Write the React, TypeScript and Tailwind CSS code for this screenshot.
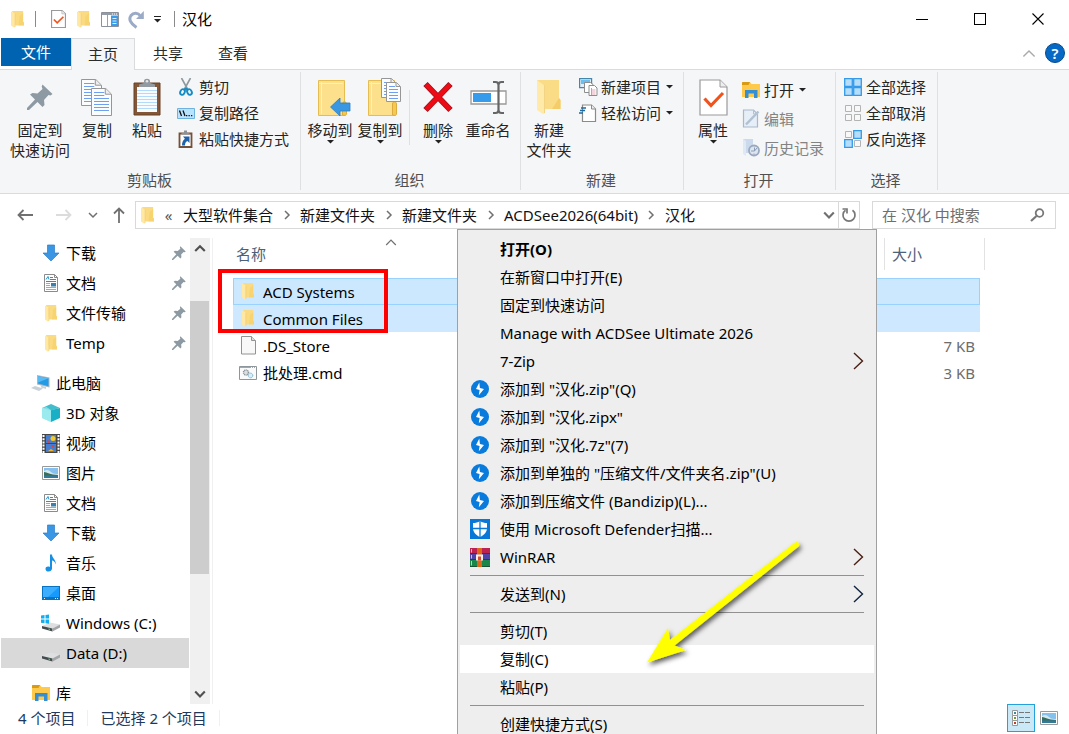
import type { ReactNode } from "react";

const svg = "block shrink-0";

function Folder({ w = 12, h = 17 }: { w?: number; h?: number }) {
  return (
    <svg className={svg} width={w} height={h} viewBox="0 0 12 17" preserveAspectRatio="none">
      <path d="M1 0h10.2v10.6l.8.8v3H4z" fill="#fbdb81" />
      <path d="M8 5l3.200-3v9l.8.4v3H7z" fill="#f5ce66" opacity=".6" />
      <path d="M0 .4L3.800 2.600V16l-.8.8L0 14.400z" fill="#ffe8a3" />
      <path d="M3.800 2.600V16" stroke="#eec667" strokeWidth=".5" />
    </svg>
  );
}

function LargeFolder() {
  return (
    <svg className={svg} width="26" height="36" viewBox="0 0 26 36">
      <path d="M1 1h22v18l1.500 2V30H5z" fill="#fbdc86" />
      <path d="M23 19l1.500 2V30H16z" fill="#f4cd68" />
      <path d="M1 1l8 6v27l-2 1-6-4z" fill="#ffeaa9" />
      <path d="M8.500 6.500V34" stroke="#e9c56b" strokeWidth=".6" />
    </svg>
  );
}

function Checked({ big = false }: { big?: boolean }) {
  return (
    <svg className={svg} width={big ? 29 : 15} height={big ? 37 : 18} viewBox="0 0 29 37" preserveAspectRatio="none">
      <path d="M1 1h20l7 7v28H1z" fill="#fff" stroke="#9a9a9a" strokeWidth={big ? 1.2 : 2.400} />
      <path d="M21 1v7h7" fill="#eee" stroke="#9a9a9a" />
      <path d="M5.500 19.500l6.500 7L24 14" fill="none" stroke="#f0541e" strokeWidth="3.200" />
    </svg>
  );
}

function Pane() {
  return (
    <svg className={svg} width="18" height="15" viewBox="0 0 18 15">
      <path d="M.5.5h17v14H.5z" fill="#fff" stroke="#8a919b" />
      <path d="M1 1h16v2H1z" fill="#939ba7" />
      <path d="M11 1.500h1v1h-1zM13 1.500h1v1h-1zM15 1.500h1v1h-1z" fill="#fff" />
      <path d="M6.500 3v11" stroke="#9ba1aa" />
      <path d="M10 3.500h7V14h-7z" fill="#3a9be8" />
      <path d="M11.500 6.500h4M11.500 9h4M11.500 11.500h4" stroke="#d6ecff" />
    </svg>
  );
}

function Redo() {
  return (
    <svg className={svg} width="17" height="19" viewBox="0 0 17 19">
      <path d="M8.500 17.500C2 13 .5 9 3 5.500c2.500-3.300 7-3 9.500.5" fill="none" stroke="#9baac6" strokeWidth="3" />
      <path d="M15.800 1v8H8z" fill="#9baac6" />
    </svg>
  );
}

function Caret() {
  return (
    <svg className={svg} width="7" height="4" viewBox="0 0 7 4">
      <path d="M0 0h7L3.500 3.500z" fill="#222" />
    </svg>
  );
}

function Pin({ size = 14 }: { size?: number }) {
  return (
    <svg className={svg} width={size} height={size} viewBox="0 0 26 26">
      <path d="M15.500.5l10 9.500-2 1.500-2-.5-4.500 5 .5 5-2 2-5-5L2 26H0v-2l8-8.500-5-5 2.500-1.500 5 .5 5-4.500-.8-2.500z" fill="#8d9aa3" />
    </svg>
  );
}

function Paper({ x, y, w, h, lines }: { x: number; y: number; w: number; h: number; lines: number }) {
  const f = w / 3.500;
  return (
    <g transform={`translate(${x} ${y})`}>
      <path d={`M.5.5h${w - f}l${f} ${f}v${h - f}H.5z`} fill="#fbfcfe" stroke="#969696" />
      <path d={`M${w - f} .5v${f}h${f}`} fill="#eee" stroke="#969696" />
      {Array.from({ length: lines }, (_, i) => (
        <path key={i} d={`M3 ${4.500 + i * 3}h${i * 3 < f - 1 ? w - f - 4 : w - 5}`} stroke="#6f9ff0" />
      ))}
    </g>
  );
}

function CopyIcon() {
  return (
    <svg className={svg} width="32" height="37" viewBox="0 0 32 37">
      <Paper x={0} y={0} w={20} h={26} lines={7} />
      <Paper x={10} y={9} w={20} h={27} lines={7} />
    </svg>
  );
}

function Clipboard() {
  return (
    <svg className={svg} width="28" height="38" viewBox="0 0 28 38">
      <path d="M1 5h26v32H1z" fill="#825637" stroke="#684127" />
      <path d="M4 9h20v25H4z" fill="#f8fbff" />
      {[12, 15, 18, 21, 24, 27, 30].map((y) => (
        <path key={y} d={`M4 ${y + 0.500}h20`} stroke="#b4dafa" />
      ))}
      <path d="M6 9V6.500l5-1.500V3c0-3 6-3 6 0v2l5 1.500V9z" fill="#929ba1" />
      <circle cx="14" cy="3.200" r="1.300" fill="#e8e8e8" />
    </svg>
  );
}

function Scissors() {
  return (
    <svg className={svg} width="18" height="18" viewBox="0 0 18 18">
      <path d="M4.500 0l6 11M13.500 0l-6 11" stroke="#8e989e" strokeWidth="1.600" />
      <path d="M9 9.500l2.500 1.500-1 3L9 11.500 7.500 14l-1-3z" fill="#168bc4" />
      <ellipse cx="5.500" cy="14" rx="2.200" ry="2.900" transform="rotate(25 5.500 14)" fill="none" stroke="#168bc4" strokeWidth="1.900" />
      <ellipse cx="12.500" cy="14" rx="2.200" ry="2.900" transform="rotate(-25 12.500 14)" fill="none" stroke="#168bc4" strokeWidth="1.900" />
    </svg>
  );
}

function PathIcon() {
  return (
    <svg className={svg} width="18" height="11" viewBox="0 0 18 11">
      <path d="M.5.5h17v10H.5z" fill="#b9e2fd" stroke="#6eb3df" />
      <path d="M2.500 2.500l2 5.500M6 2.500L8 8" stroke="#111" strokeWidth="1.300" />
      <path d="M9 7h1.300v1.300H9zM11.500 7h1.300v1.300h-1.300zM14 7h1.300v1.300H14z" fill="#111" />
    </svg>
  );
}

function PasteLink() {
  return (
    <svg className={svg} width="18" height="18" viewBox="0 0 18 18">
      <path d="M2.500 3.500h12v13.500h-12z" fill="#fff" stroke="#765139" strokeWidth="1.800" />
      <path d="M4.500 4.500V3H7V.5h3V3h2.500v1.500z" fill="#899299" />
      <path d="M6 6.500h6.500V13l-2-2c-2 1.200-2.500 2-2.500 4.500H5c0-3.200 1-5 2.900-6.700z" fill="#1d62aa" />
    </svg>
  );
}

function TransferFolder({ copy = false }: { copy?: boolean }) {
  return (
    <svg className={svg} width="34" height="39" viewBox="0 0 34 39">
      <path d="M1.500 2.500h26v35h-26z" fill="#fde08c" stroke="#e5bd51" />
      <path d="M4.500 4v32M2 5.500h24" stroke="#fff0b9" />
      <path d="M25.500 37V26c0-3 4-3 4 0v10l-1 1.500z" fill="#f6ca50" stroke="#dcad3e" />
      {copy ? (
        <>
          <Paper x={14} y={0} w={14} h={19} lines={5} />
          <Paper x={19} y={4} w={14} h={19} lines={5} />
        </>
      ) : (
        <path d="M13.500 29l9.500-9V25h10v8H23v5z" fill="#3a98e2" stroke="#2b7fc5" strokeWidth=".8" />
      )}
    </svg>
  );
}

function DeleteIcon() {
  return (
    <svg className={svg} width="32" height="32" viewBox="0 0 32 32">
      <path d="M3.500 3l25 26M28.500 3l-25 26" stroke="#a1121a" strokeWidth="6" />
      <path d="M4 3.500l24 25M28 3.500l-24 25" stroke="#ed0b16" strokeWidth="4.500" />
    </svg>
  );
}

function RenameIcon() {
  return (
    <svg className={svg} width="37" height="35" viewBox="0 0 37 35">
      <path d="M1 11h35v13H1z" fill="#fff" stroke="#999" strokeWidth="1.300" />
      <path d="M3 13h18v9H3z" fill="#369bea" />
      <path d="M23 2h2.500c2.500 0 3 1 3 3v25c0 2 1 3 3 3H34M34 2h-2.500c-2 0-3 1-3 3v25c0 2-.5 3-3 3H23" fill="none" stroke="#666" strokeWidth="2.200" />
    </svg>
  );
}

function NewItem() {
  return (
    <svg className={svg} width="19" height="18" viewBox="0 0 19 18">
      <path d="M.6.6h12v9H.6z" fill="#dff0fc" stroke="#4487ab" strokeWidth="1.200" />
      <path d="M2 2h9v4H2z" fill="#6cbef0" />
      <path d="M5.500 4.500h6l2.500 2v8H5.500z" fill="#fff" stroke="#8d8d8d" />
      <path d="M10 7.500h5.500l2.500 2.500v7.500h-8z" fill="#fff" stroke="#8d8d8d" />
      <path d="M12 12h4.500M12 14h4.500M12 16h4.500" stroke="#e7a9b9" />
      <path d="M12.500 10v7" stroke="#82b7df" />
    </svg>
  );
}

function EasyAccess() {
  return (
    <svg className={svg} width="19" height="19" viewBox="0 0 19 19">
      <path d="M3.500 1h9l4 4v12.500h-13z" fill="#fff" stroke="#8b8b8b" strokeWidth="1.200" />
      <path d="M12.500 1v4h4" fill="#eee" stroke="#8b8b8b" />
      <path d="M2 4h5M1 6.500h5M0 9h4" stroke="#206b9f" strokeWidth="1.300" />
    </svg>
  );
}

function OpenFolder() {
  return (
    <svg className={svg} width="18" height="16" viewBox="0 0 18 16">
      <path d="M0 1c0-1 .6-1 1-1h7l1.500 2H18v13H0z" fill="#ffca4b" />
      <path d="M0 1c0-1 .6-1 1-1h7l-1.500 3H0z" fill="#d99b14" />
      <path d="M3 8h12.500v8H12v-4.500H6.500V16H3z" fill="#378fd3" />
    </svg>
  );
}

function EditIcon() {
  return (
    <svg className={svg} width="18" height="19" viewBox="0 0 18 19">
      <path d="M1.500 1h10l4 4v13h-14z" fill="#e6eef7" stroke="#a9b8cb" strokeWidth="1.200" />
      <path d="M4 15.500L16.500 2.500" stroke="#b1c0d2" strokeWidth="2.500" />
      <path d="M11.500 1v4h4" fill="none" stroke="#b6c1cf" />
    </svg>
  );
}

function HistoryIcon() {
  return (
    <svg className={svg} width="18" height="19" viewBox="0 0 18 19">
      <path d="M1 1h10v14H1z" fill="#cbd9ec" />
      <path d="M1 1l3 2v15l-3-2z" fill="#dfe9f6" />
      <circle cx="12" cy="12.500" r="5" fill="#dde5f0" stroke="#9aa9bf" strokeWidth="1.800" />
      <path d="M12.500 9.500v3.500l2.500-3M9 13h3.500M12 15.500v1" fill="none" stroke="#8d9db5" />
    </svg>
  );
}

function Grid({ on }: { on: number[] }) {
  const xy = [[1, 1], [10, 1], [1, 10], [10, 10]];
  return (
    <svg className={svg} width="18" height="18" viewBox="0 0 18 18">
      {xy.map(([x, y], i) =>
        on.includes(i) ? (
          <path key={i} d={`M${x - 0.300} ${y - 0.300}h7.600v7.600h-7.600z`} fill="#b6defb" stroke="#339aea" strokeWidth="1.300" />
        ) : (
          <path key={i} d={`M${x + 0.500} ${y + 0.500}h6v6h-6z`} fill="#f8f8f8" stroke="#b3b3b3" />
        )
      )}
    </svg>
  );
}

function Down() {
  return (
    <svg className={svg} width="18" height="18" viewBox="0 0 18 18">
      <path d="M5.500 1h7v8H17l-8 8-8-8h4.500z" fill="#3b96e3" stroke="#2a7dcc" strokeWidth=".7" />
    </svg>
  );
}

function DocIcon() {
  return (
    <svg className={svg} width="18" height="18" viewBox="0 0 18 18">
      <path d="M2.500.5h10l3 3v14h-13z" fill="#fff" stroke="#8b8b8b" />
      <path d="M12.500.5v3h3" fill="none" stroke="#8b8b8b" />
      <path d="M4 5.500l2-3 1 3M8 3.500h3M8 5.500h6M4 7.500h10" stroke="#2492d1" fill="none" />
      <path d="M4 9.500h4M4 11.500h4M4 13.500h10M4 15.500h10" stroke="#a8a8a8" />
      <path d="M9 9h5v3.500H9z" fill="#3e7fab" />
    </svg>
  );
}

function Computer() {
  return (
    <svg className={svg} width="20" height="18" viewBox="0 0 20 18">
      <path d="M6 1l12.500 2.500v10L6 10.500z" fill="#a8b7c3" />
      <path d="M7 2.300l10.500 2v8L7 9.500z" fill="#249be5" />
      <path d="M7 2.300l10.500 2L7 8.500z" fill="#58baf3" />
      <path d="M10 11.500v2l5 1.500v-2M4 12l8 2.500-4 2.500-8-3z" fill="#c8d1d8" />
    </svg>
  );
}

function Cube() {
  return (
    <svg className={svg} width="18" height="18" viewBox="0 0 18 18">
      <path d="M0 4l9 2v12l-9-4z" fill="#76e0ea" />
      <path d="M18 4L9 6v12l9-4z" fill="#19afc4" />
      <path d="M0 4l9-4 9 4-9 2.500z" fill="#43bccb" />
      <path d="M0 4l4.500-1L9 6v12l-9-4z" fill="#b2f1f4" opacity=".6" />
    </svg>
  );
}

function Film() {
  return (
    <svg className={svg} width="18" height="19" viewBox="0 0 18 19">
      <path d="M0 0h18v19H0z" fill="#464646" />
      <path d="M4 1h10v8H4zM4 10h10v8H4z" fill="#477ed0" />
      <circle cx="11" cy="4.500" r="2.500" fill="#f4c923" />
      <path d="M9 11h4l-2 3zM5 6l3 1-1 2-2-1z" fill="#e53d37" />
      <path d="M6 17l3-2 3 2z" fill="#f4b424" />
      <path d="M1.500 1v18M16.500 1v18" stroke="#fff" strokeWidth="2" strokeDasharray="2 1.200" />
    </svg>
  );
}

function Picture() {
  return (
    <svg className={svg} width="18" height="14" viewBox="0 0 18 14">
      <path d="M.5.5h17v13H.5z" fill="#fff" stroke="#999" />
      <path d="M2 2h14v10H2z" fill="#86c0ee" />
      <path d="M2 5c3-2 5-1 7 1s5 2 7 2v1H2z" fill="#d4e8ef" />
      <path d="M2 6c3 0 6 3 14 3v1H2z" fill="#376e5c" />
      <path d="M2 9.500h14V12H2z" fill="#34789b" />
    </svg>
  );
}

function Music() {
  return (
    <svg className={svg} width="18" height="18" viewBox="0 0 18 18">
      <path d="M8 .5h2c0 4 4.500 5 3.500 10-.5-3-2-4-3.500-4v8c0 4-6.500 4-6.500.5 0-2.500 2.500-3 4.500-2z" fill="#178fe5" />
    </svg>
  );
}

function Desktop() {
  return (
    <svg className={svg} width="18" height="14" viewBox="0 0 18 14">
      <path d="M0 0h18v14H0z" fill="#0873bf" />
      <path d="M1 1h16v10H1z" fill="#159aff" />
      <path d="M1 1h16L6 11H1z" fill="#3baeff" />
      <path d="M2 12.500h1M13 12.500h1M15 12.500h1" stroke="#fff" />
    </svg>
  );
}

function Drive({ windows = false }: { windows?: boolean }) {
  return (
    <svg className={svg} width="20" height="18" viewBox="0 0 20 18">
      <path d="M1 12l8-3.500 10 2-7.500 4z" fill="#dddfe1" />
      <path d="M1 12l10.500 2.500V17.500L1 14.500z" fill="#434b4f" />
      <path d="M11.500 14.500l7.500-4V13.500l-7.500 4z" fill="#a2a6a8" />
      <path d="M7.500 15l1.500.4" stroke="#66e46d" />
      {windows && <path d="M0 1.500L3.500 1v3.500H0zM4.500 1L8 .5v4H4.500zM0 5.500h3.500v3.800L0 8.800zM4.500 5.500H8v4.300l-3.500-.5z" fill="#12aff0" />}
    </svg>
  );
}

function Blank() {
  return (
    <svg className={svg} width="15" height="19" viewBox="0 0 15 19">
      <path d="M.5.5h10l4 4v13.500H.5z" fill="#f8f8f8" stroke="#929292" />
      <path d="M10.500.5v4h4" fill="#ddd" stroke="#929292" />
    </svg>
  );
}

function Batch() {
  return (
    <svg className={svg} width="18" height="14" viewBox="0 0 18 14">
      <path d="M.5.5h17v13H.5z" fill="#fafafa" stroke="#8e959b" />
      <path d="M1 1.500h16" stroke="#a1a8ae" />
      <path d="M12 1.500h1M14 1.500h1M16 1.500h1" stroke="#fff" />
      <circle cx="7" cy="6.500" r="2.500" fill="#ddd" stroke="#85939d" strokeDasharray="1 .6" strokeWidth="1.500" />
      <circle cx="11.500" cy="9.500" r="2.300" fill="#d7effa" stroke="#77a9c0" strokeDasharray="1 .5" />
    </svg>
  );
}

function Bolt() {
  return (
    <svg className={svg} width="20" height="20" viewBox="0 0 20 20">
      <circle cx="10" cy="10" r="9" fill="#087bdc" />
      <path d="M9.300 3.500L6 10l3.600 1.100-.8 5.200L14 10l-4.100-1z" fill="#fff" />
    </svg>
  );
}

function Shield() {
  return (
    <svg className={svg} width="20" height="20" viewBox="0 0 20 20">
      <path d="M0 0h20v20H0z" fill="#0878d8" />
      <path d="M10 2c2 1.500 4.500 2 7 2v5c0 4-2.500 7-7 9-4.500-2-7-5-7-9V4c2.500 0 5-.5 7-2z" fill="#fff" />
      <path d="M10 2v16M3 9.500h14" stroke="#0878d8" strokeWidth="1.300" />
    </svg>
  );
}

function Rar() {
  return (
    <svg className={svg} width="20" height="19" viewBox="0 0 20 19">
      <path d="M0 0h20v6H0z" fill="#bd234e" />
      <path d="M0 6h20v6H0z" fill="#4f43a5" />
      <path d="M0 12h20v7H0z" fill="#178848" />
      <path d="M0 5.500h20M0 11.500h20M0 18.500h20" stroke="#1c1c2c" opacity=".5" />
      <path d="M1.500 1v3.500M1.500 7v3.500M1.500 13v4.500" stroke="#f0cc46" />
      <path d="M7 0h5v19H7z" fill="#dc6818" />
      <path d="M6 6.500h7v6H6z" fill="#f7eee7" />
      <path d="M8 8.500h3v4H8z" fill="#d64832" />
    </svg>
  );
}

function Chevron({ dir, size = 10, color = "#707070", stroke = 1.500 }: { dir: "up" | "down" | "right"; size?: number; color?: string; stroke?: number }) {
  const d = { up: "M1 7.500l4-4 4 4", down: "M1 3l4 4 4-4", right: "M3 1l4 4-4 4" }[dir];
  return (
    <svg className={svg} width={size} height={size} viewBox="0 0 10 10">
      <path d={d} fill="none" stroke={color} strokeWidth={stroke} />
    </svg>
  );
}

function Arrow({ dir, color = "#707070" }: { dir: "left" | "right" | "up"; color?: string }) {
  const d = { left: "M16 8H1.500M6.500 3l-5 5 5 5", right: "M0 8h14.500M9.500 3l5 5-5 5", up: "M8 16V1.500M3 6.500l5-5 5 5" }[dir];
  return (
    <svg className={svg} width="16" height="16" viewBox="0 0 16 16">
      <path d={d} fill="none" stroke={color} strokeWidth="1.800" />
    </svg>
  );
}

function Large({ icon, lines, drop, shift, width = "w-[50px]" }: { icon: ReactNode; lines: string[]; drop?: boolean; shift?: boolean; width?: string }) {
  return (
    <button type="button" className={`flex shrink-0 flex-col items-center whitespace-nowrap ${width}`}>
      <span className={`flex h-[46px] items-center justify-center ${shift ? "pl-2" : ""}`}>{icon}</span>
      {lines.map((l) => (
        <span key={l} className="leading-5">{l}</span>
      ))}
      {drop && <Caret />}
    </button>
  );
}

function Small({ icon, text, drop, off, tall }: { icon: ReactNode; text: string; drop?: boolean; off?: boolean; tall?: boolean }) {
  return (
    <button type="button" className={`flex items-center whitespace-nowrap ${tall ? "h-[29px]" : "h-[26px]"} ${off ? "text-[#838383]" : ""}`}>
      <span className="flex w-[22px] justify-start">{icon}</span>
      <span>{text}</span>
      {drop && <span className="ml-[5px]"><Caret /></span>}
    </button>
  );
}

function Group({ label, width, children }: { label: string; width: string; children: ReactNode }) {
  return (
    <section aria-label={label} className={`mt-0.5 mb-[3px] flex shrink-0 flex-col border-r border-[#dfe0e2] ${width}`}>
      <div className="flex flex-1 items-start pt-0.5">{children}</div>
      <div className="pr-0.5 text-center leading-5 text-[#505050]">{label}</div>
    </section>
  );
}

type NavItem = { text: string; icon: ReactNode; pinned?: boolean; root?: boolean; active?: boolean };

const nav: NavItem[][] = [
  [
    { text: "下载", icon: <Down />, pinned: true },
    { text: "文档", icon: <DocIcon />, pinned: true },
    { text: "文件传输", icon: <Folder />, pinned: true },
    { text: "Temp", icon: <Folder />, pinned: true },
  ],
  [
    { text: "此电脑", icon: <Computer />, root: true },
    { text: "3D 对象", icon: <Cube /> },
    { text: "视频", icon: <Film /> },
    { text: "图片", icon: <Picture /> },
    { text: "文档", icon: <DocIcon /> },
    { text: "下载", icon: <Down /> },
    { text: "音乐", icon: <Music /> },
    { text: "桌面", icon: <Desktop /> },
    { text: "Windows (C:)", icon: <Drive windows /> },
    { text: "Data (D:)", icon: <Drive />, active: true },
  ],
  [{ text: "库", icon: <OpenFolder />, root: true }],
];

const files = [
  { name: "ACD Systems", icon: <Folder />, size: "", state: "focus" },
  { name: "Common Files", icon: <Folder />, size: "", state: "selected" },
  { name: ".DS_Store", icon: <Blank />, size: "7 KB", state: "" },
  { name: "批处理.cmd", icon: <Batch />, size: "3 KB", state: "" },
];

const cellState: Record<string, string> = {
  focus: "border-[#99d1ff] bg-[#cce8ff]",
  selected: "border-[#cde8ff] bg-[#cde8ff]",
  "": "border-transparent",
};

type MenuItem = { text: string; icon?: ReactNode; bold?: boolean; sub?: string; hot?: boolean };

const menu: MenuItem[][] = [
  [
    { text: "打开(O)", bold: true },
    { text: "在新窗口中打开(E)" },
    { text: "固定到快速访问" },
    { text: "Manage with ACDSee Ultimate 2026" },
    { text: "7-Zip", sub: "#4a1f14" },
    { text: '添加到 "汉化.zip"(Q)', icon: <Bolt /> },
    { text: '添加到 "汉化.zipx"', icon: <Bolt /> },
    { text: '添加到 "汉化.7z"(7)', icon: <Bolt /> },
    { text: '添加到单独的 "压缩文件/文件夹名.zip"(U)', icon: <Bolt /> },
    { text: "添加到压缩文件 (Bandizip)(L)...", icon: <Bolt /> },
    { text: "使用 Microsoft Defender扫描...", icon: <Shield /> },
    { text: "WinRAR", icon: <Rar />, sub: "#4a1f14" },
  ],
  [{ text: "发送到(N)", sub: "#10233f" }],
  [{ text: "剪切(T)" }, { text: "复制(C)", hot: true }, { text: "粘贴(P)" }],
  [{ text: "创建快捷方式(S)" }],
];

function TitleBar() {
  return (
    <header className="flex h-[38px] shrink-0 items-center pl-[11px]">
      <Folder w={13} />
      <span className="ml-[11px] h-4 w-px bg-[#8a8a8a]" />
      <button type="button" aria-label="属性" className="ml-[15px]"><Checked /></button>
      <button type="button" aria-label="新建文件夹" className="ml-[11px]"><Folder w={13} /></button>
      <button type="button" aria-label="窗格" className="ml-[11px]"><Pane /></button>
      <button type="button" aria-label="恢复" className="ml-[9px]"><Redo /></button>
      <button type="button" aria-label="自定义" className="ml-[9px] flex flex-col items-center gap-0.5">
        <span className="h-px w-[7px] bg-[#222]" />
        <Caret />
      </button>
      <span className="ml-[13px] h-4 w-px bg-[#8a8a8a]" />
      <h1 className="ml-[7px]">汉化</h1>
      <div className="ml-auto flex h-full pr-0.5">
        <button type="button" aria-label="最小化" className="flex w-[58px] items-center justify-center">
          <span className="h-px w-3 bg-black" />
        </button>
        <button type="button" aria-label="最大化" className="flex w-[58px] items-center justify-center">
          <span className="size-3 border border-black" />
        </button>
        <button type="button" aria-label="关闭" className="flex w-[58px] items-center justify-center">
          <svg width="12" height="12" viewBox="0 0 12 12"><path d="M.5.5l11 11M11.500.5l-11 11" stroke="#000" strokeWidth="1.100" /></svg>
        </button>
      </div>
    </header>
  );
}

function Tabs() {
  return (
    <nav className="flex h-8 shrink-0 border-b border-[#dadbdc] pl-px">
      <button type="button" className="h-7 w-[70px] bg-[#0063b1] text-white">文件</button>
      <button type="button" className="-mb-px w-16 border border-b-0 border-[#dadbdc] bg-[#f5f6f7] pb-0.5 text-[#2b2b2b]">主页</button>
      <button type="button" className="w-[66px] pb-0.5 text-[#2b2b2b]">共享</button>
      <button type="button" className="w-16 pb-0.5 text-[#2b2b2b]">查看</button>
      <div className="ml-auto flex items-center gap-[9px] pr-1 pb-0.5">
        <button type="button" aria-label="折叠功能区"><Chevron dir="up" size={14} color="#aaa" stroke={1} /></button>
        <button type="button" className="size-5 rounded-full border border-[#074b8b] bg-[#0769c6] text-center text-[15px] leading-[18px] font-semibold text-white">?</button>
      </div>
    </nav>
  );
}

function Ribbon() {
  return (
    <div className="flex h-[124px] shrink-0 border-b border-[#dadbdc] bg-[#f5f6f7] pl-px text-[#252525]">
      <Group label="剪贴板" width="w-[300px]">
        <Large width="w-[72px] ml-[3px]" icon={<Pin size={26} />} lines={["固定到", "快速访问"]} />
        <Large width="w-[42px]" icon={<CopyIcon />} lines={["复制"]} />
        <Large width="w-[58px]" icon={<Clipboard />} lines={["粘贴"]} />
        <div className="ml-px">
          <Small icon={<Scissors />} text="剪切" />
          <Small icon={<PathIcon />} text="复制路径" />
          <Small icon={<PasteLink />} text="粘贴快捷方式" />
        </div>
      </Group>
      <Group label="组织" width="w-[220px]">
        <Large width="w-[50px] ml-1" icon={<TransferFolder />} lines={["移动到"]} drop shift />
        <Large icon={<TransferFolder copy />} lines={["复制到"]} drop shift />
        <span className="mt-4 ml-1 h-[55px] w-px bg-[#dfe0e2]" />
        <Large width="w-[50px] ml-[3px]" icon={<DeleteIcon />} lines={["删除"]} drop />
        <Large icon={<RenameIcon />} lines={["重命名"]} />
      </Group>
      <Group label="新建" width="w-[163px]">
        <Large width="w-[50px] ml-[3px]" icon={<LargeFolder />} lines={["新建", "文件夹"]} />
        <div className="ml-[5px]">
          <Small icon={<NewItem />} text="新建项目" drop />
          <Small icon={<EasyAccess />} text="轻松访问" drop />
        </div>
      </Group>
      <Group label="打开" width="w-[152px]">
        <Large width="w-[50px] ml-1" icon={<Checked big />} lines={["属性"]} drop />
        <div className="ml-1 pt-px">
          <Small icon={<OpenFolder />} text="打开" drop tall />
          <Small icon={<EditIcon />} text="编辑" off tall />
          <Small icon={<HistoryIcon />} text="历史记录" off tall />
        </div>
      </Group>
      <Group label="选择" width="w-[102px]">
        <div className="ml-2">
          <Small icon={<Grid on={[0, 1, 2, 3]} />} text="全部选择" />
          <Small icon={<Grid on={[]} />} text="全部取消" />
          <Small icon={<Grid on={[1, 2]} />} text="反向选择" />
        </div>
      </Group>
    </div>
  );
}

function AddressRow() {
  const crumbs = ["大型软件集合", "新建文件夹", "新建文件夹", "ACDSee2026(64bit)", "汉化"];
  return (
    <div className="flex h-11 shrink-0 items-start pt-[7px] pr-[13px] pl-[17px]">
      <div className="flex h-7 items-center">
        <button type="button" aria-label="后退"><Arrow dir="left" /></button>
        <button type="button" aria-label="前进" className="ml-[23px]"><Arrow dir="right" color="#dcdcdc" /></button>
        <button type="button" aria-label="最近位置" className="ml-4"><Chevron dir="down" /></button>
        <button type="button" aria-label="上移" className="ml-[13px]"><Arrow dir="up" /></button>
      </div>
      <div className="ml-2 flex h-7 flex-1 items-center border border-[#d9d9d9] pl-[5px]">
        <Folder w={13} />
        <span className="w-[29px] text-center leading-5 text-[#555]">«</span>
        {crumbs.map((c, i) => (
          <span key={i} className="flex items-center whitespace-nowrap">
            {i > 0 && <span className="flex w-[27px] justify-center"><Chevron dir="right" /></span>}
            <a href="#" className="text-[#111]">{c}</a>
          </span>
        ))}
        <button type="button" aria-label="历史" className="mr-[3px] ml-auto"><Chevron dir="down" size={12} stroke={1.800} /></button>
        <button type="button" aria-label="刷新" className="flex h-full w-[21px] items-center justify-center border-l border-[#d9d9d9]">
          <svg width="16" height="16" viewBox="0 0 16 16">
            <path d="M11.500 3.300A6 6 0 1 1 4.500 3.300" fill="none" stroke="#777" strokeWidth="1.700" />
            <path d="M1.500 2H6v4.500" fill="none" stroke="#777" strokeWidth="1.700" />
          </svg>
        </button>
      </div>
      <label className="ml-3 flex h-7 w-[184px] items-center border border-[#d9d9d9] pr-2 pl-[9px]">
        <input aria-label="搜索" placeholder="在 汉化 中搜索" className="min-w-0 flex-1 outline-none placeholder:text-[#6f6f6f]" />
        <svg className={svg} width="18" height="16" viewBox="0 0 18 16">
          <circle cx="10.500" cy="6" r="3.800" fill="none" stroke="#777" strokeWidth="1.800" />
          <path d="M7.500 9L2 14" stroke="#777" strokeWidth="2.200" />
        </svg>
      </label>
    </div>
  );
}

function Sidebar() {
  return (
    <aside className="flex w-[213px] shrink-0 border-r border-[#f0f0f0]">
      <div className="w-[189px] space-y-2.5 overflow-hidden pl-px">
        {nav.map((section, s) => (
          <ul key={s}>
            {section.map((n, i) => (
              <li key={i}>
                <a href="#" className={`flex h-[30px] items-center pr-[3px] ${n.root ? "pl-[30px]" : "pl-10"} ${n.active ? "bg-[#d9d9d9]" : ""}`}>
                  <span className="flex w-5 justify-center">{n.icon}</span>
                  <span className="ml-[5px] flex-1 whitespace-nowrap">{n.text}</span>
                  {n.pinned && <Pin />}
                </a>
              </li>
            ))}
          </ul>
        ))}
      </div>
      <div className="ml-px flex w-5 flex-col items-center bg-[#f0f0f0] pr-px">
        <span className="flex h-[63px] items-start pt-1"><Chevron dir="up" size={12} color="#505050" stroke={1.800} /></span>
        <span className="h-[273px] w-[19px] self-start bg-[#cdcdcd]" />
        <span className="mt-auto pb-1"><Chevron dir="down" size={12} color="#505050" stroke={1.800} /></span>
      </div>
    </aside>
  );
}

function FileList() {
  return (
    <section className="relative min-w-0 flex-1 pr-[84px] pl-5">
      <table className="w-full table-fixed border-separate border-spacing-0">
        <colgroup>
          <col className="w-[316px]" />
          <col />
          <col className="w-[95px]" />
          <col className="w-[5px]" />
        </colgroup>
        <thead>
          <tr className="h-8 text-left text-[#4c607a]">
            <th className="relative pl-[3px] font-normal">
              名称
              <span className="absolute inset-x-0 -top-0.5 flex justify-center"><Chevron dir="up" size={12} stroke={1} /></span>
            </th>
            <th className="border-r border-[#e2e2e2]" />
            <th className="pl-[7px] font-normal">大小</th>
            <th className="border-r border-[#e2e2e2]" />
          </tr>
        </thead>
        <tbody>
          <tr className="h-2"><td colSpan={4} /></tr>
          {files.map((f) => (
            <tr key={f.name} className="h-[27px]">
              <td className={`border-y border-l p-0 ${cellState[f.state]}`}>
                <span className="flex items-center">
                  <span className="ml-1 flex w-5 justify-center">{f.icon}</span>
                  <span className="ml-[5px] leading-5">{f.name}</span>
                </span>
              </td>
              <td className={`border-y p-0 ${cellState[f.state]}`} />
              <td className={`border-y border-r py-0 pr-1 pl-0 text-right leading-5 text-[#6d6d6d] ${cellState[f.state]}`}>{f.size}</td>
              <td className="p-0" />
            </tr>
          ))}
        </tbody>
      </table>
      <div className="pointer-events-none absolute top-[31px] left-[5px] h-[64px] w-[170px] border-4 border-[#fe0000]" />
    </section>
  );
}

function ContextMenu() {
  return (
    <div role="menu" className="absolute top-[229px] left-[457px] w-[420px] border border-[#a0a0a0] bg-[#eee] px-0.5 pt-[5px]">
      {menu.map((section, s) => (
        <div key={s} role="group">
          {s > 0 && <hr className="mx-2.5 my-1 border-[#919191]" />}
          {section.map((m) => (
            <button key={m.text} role="menuitem" type="button" className={`flex h-7 w-full items-center pr-[9px] pl-2.5 text-left whitespace-nowrap ${m.hot ? "bg-white" : ""} ${m.bold ? "font-bold" : ""}`}>
              <span className="w-[30px]">{m.icon}</span>
              <span className="flex-1">{m.text}</span>
              {m.sub && (
                <svg className={svg} width="13" height="18" viewBox="0 0 13 18">
                  <path d="M2 1l8.500 8L2 17" fill="none" stroke={m.sub} strokeWidth="1.400" />
                </svg>
              )}
            </button>
          ))}
        </div>
      ))}
    </div>
  );
}

function StatusBar() {
  return (
    <footer className="flex h-[30px] shrink-0 items-center pr-[11px] pb-0.5 pl-[18px] text-[#1e395b]">
      <span>4 个项目</span>
      <span className="mx-3 h-4 w-px bg-[#f0f0f0]" />
      <span>已选择 2 个项目</span>
      <span className="mx-3 h-4 w-px bg-[#f0f0f0]" />
      <button type="button" aria-label="详细信息" className="ml-auto flex h-7 w-7 items-center justify-center border border-[#26a0da] bg-[#cbe8f6]">
        <svg className={svg} width="18" height="16" viewBox="0 0 18 16">
          {[0, 5, 10].map((y, i) => (
            <g key={y}>
              <path d={`M.5 ${y + 0.500}h5v5h-5z`} fill="#fff" stroke="#999" />
              <path d={`M2 ${y + 2}h2v2H2z`} fill={["#3f8897", "#719c30", "#bd4025"][i]} />
              <path d={`M7 ${y + 2.500}h5M13 ${y + 2.500}h5`} stroke="#777" />
            </g>
          ))}
        </svg>
      </button>
      <button type="button" aria-label="大缩略图" className="ml-[5px]"><Picture /></button>
    </footer>
  );
}

function Pointer() {
  return (
    <svg className="pointer-events-none absolute top-[530px] left-[635px]" width="180" height="145" viewBox="0 0 180 145">
      <defs>
        <filter id="shade" x="-10%" y="-10%" width="125%" height="130%">
          <feDropShadow dx="2" dy="3" stdDeviation="2.500" floodColor="#000" floodOpacity=".65" />
        </filter>
      </defs>
      <path filter="url(#shade)" d="M160 12.500c3-2 5.500 1.500 3.500 4L39.500 115.500 51 120 12 132.500 33 98l2 12z" fill="#ff0" />
    </svg>
  );
}

export default function App() {
  return (
    <div className="relative flex h-screen flex-col overflow-hidden bg-white font-['Noto_Sans','Noto_Sans_CJK_SC',sans-serif] text-[15px] leading-5 text-black">
      <TitleBar />
      <Tabs />
      <Ribbon />
      <AddressRow />
      <main className="flex min-h-0 flex-1">
        <Sidebar />
        <FileList />
      </main>
      <StatusBar />
      <ContextMenu />
      <Pointer />
    </div>
  );
}
